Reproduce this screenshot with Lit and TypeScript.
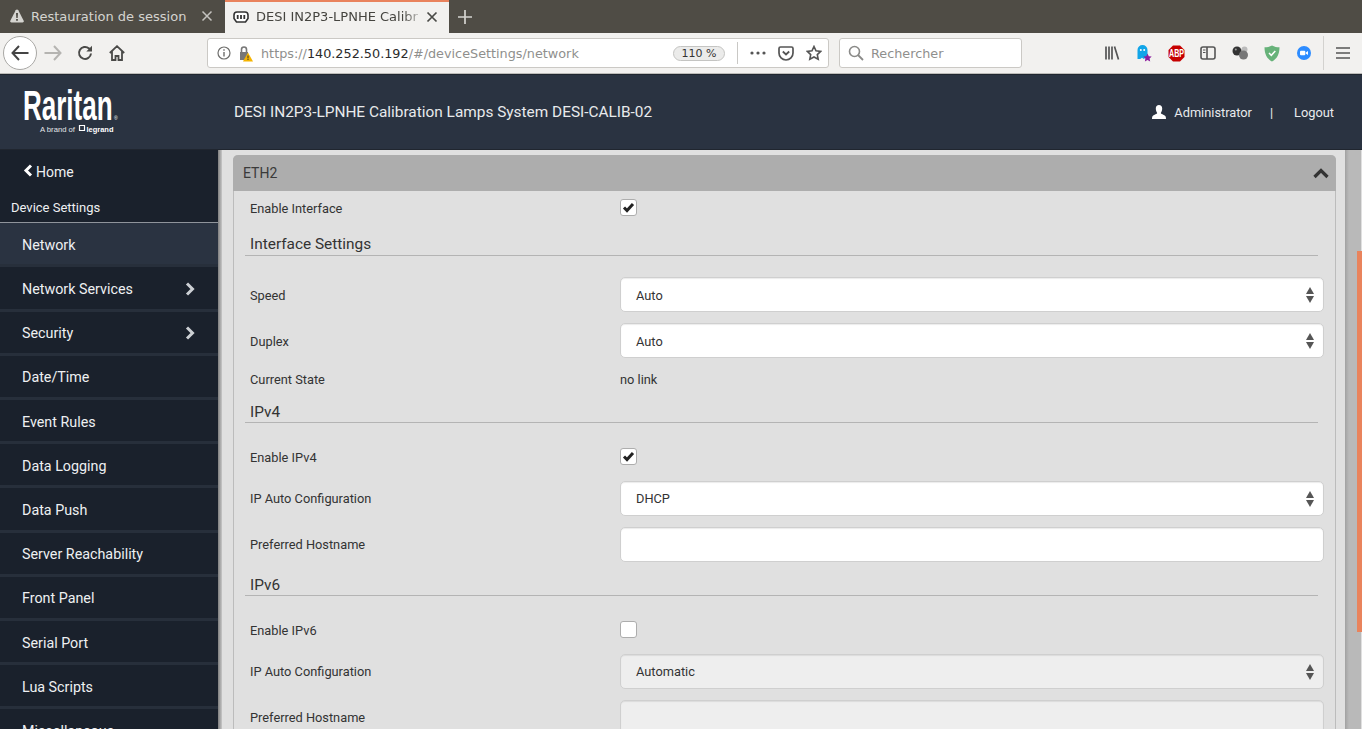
import { LitElement, html, css, svg } from "lit";
import { customElement } from "lit/decorators.js";

const menu = [
  { label: "Network", active: true },
  { label: "Network Services", more: true },
  { label: "Security", more: true },
  { label: "Date/Time" },
  { label: "Event Rules" },
  { label: "Data Logging" },
  { label: "Data Push" },
  { label: "Server Reachability" },
  { label: "Front Panel" },
  { label: "Serial Port" },
  { label: "Lua Scripts" },
  { label: "Miscellaneous" },
];

const arrows = html`<svg class="arrows" width="10" height="18" viewBox="0 0 10 18">
  <path d="M5 1l4 7H1z" fill="#555" /><path d="M1 10h8l-4 7z" fill="#555" />
</svg>`;

const tick = svg`<path d="M3 7.500l3 3 6-6.500" fill="none" stroke="#222" stroke-width="3" />`;

@customElement("app-root")
export class AppRoot extends LitElement {
  static styles = css`
    :host {
      display: block;
      width: 1362px;
      height: 729px;
      overflow: hidden;
      font-family: Roboto, sans-serif;
      color: #333;
      background: #e0e0e0;
    }

    /* browser chrome */
    .tabs {
      display: flex;
      height: 33px;
      background: #4f4c45;
      font: 13px "DejaVu Sans", sans-serif;
    }
    .tab {
      display: flex;
      align-items: center;
      box-sizing: border-box;
      height: 33px;
      width: 225px;
      padding: 0 12px 1px 10px;
      color: #d5d4d0;
    }
    .tab.current {
      width: 224px;
      background: #f2f1ef;
      color: #45443f;
      border-top: 2px solid #e9825c;
      padding: 0 11px 2px 8px;
    }
    .tab span {
      flex: 1;
      margin-left: 7px;
      white-space: nowrap;
      overflow: hidden;
    }
    .tab.current span {
      -webkit-mask-image: linear-gradient(90deg, #000 86%, transparent);
      mask-image: linear-gradient(90deg, #000 86%, transparent);
    }
    .plus {
      align-self: center;
      margin-left: 9px;
    }
    .toolbar {
      display: flex;
      align-items: center;
      box-sizing: border-box;
      height: 41px;
      background: #f2f1ef;
      border-bottom: 1px solid #bdbcb9;
      padding-left: 3px;
      font: 12.8px "DejaVu Sans", sans-serif;
      color: #8f8f8d;
    }
    .back {
      display: grid;
      place-items: center;
      box-sizing: border-box;
      width: 34px;
      height: 34px;
      border-radius: 50%;
      background: #fff;
      border: 1px solid #a9a8a5;
    }
    .tool {
      display: grid;
      place-items: center;
      flex: none;
      width: 32px;
      height: 30px;
    }
    .url {
      display: flex;
      align-items: center;
      box-sizing: border-box;
      width: 622px;
      height: 30px;
      margin-left: 74px;
      margin-right: 10px;
      background: #fff;
      border: 1px solid #cbc9c5;
      border-radius: 3px;
      padding-left: 9px;
    }
    .lock {
      margin-left: 7px;
    }
    .address {
      margin-left: 8px;
      flex: 1;
    }
    .address b {
      font-weight: 400;
      color: #2b2b2b;
    }
    .zoom {
      box-sizing: border-box;
      width: 52px;
      height: 15px;
      line-height: 13px;
      margin-right: 12px;
      font-size: 11px;
      text-align: center;
      color: #333;
      background: #ebebea;
      border: 1px solid #c4c4c2;
      border-radius: 8px;
    }
    .rule {
      width: 1px;
      height: 22px;
      background: #c9c8c5;
      margin-right: 6px;
    }
    .url .tool {
      width: 28px;
    }
    .search {
      display: flex;
      align-items: center;
      gap: 7px;
      box-sizing: border-box;
      width: 183px;
      height: 30px;
      margin-right: 74px;
      background: #fff;
      border: 1px solid #cbc9c5;
      border-radius: 3px;
      padding-left: 8px;
    }
    .ext {
      width: 32px;
    }
    .sep {
      width: 1px;
      height: 34px;
      background: #d3d2cf;
      margin: 0 3px;
    }

    /* application header */
    .header {
      display: flex;
      align-items: center;
      box-sizing: border-box;
      height: 76px;
      background: #2a3341;
      color: #fff;
      font-size: 12.8px;
      border-top: 1px solid #20262f;
      border-bottom: 1px solid #20262f;
    }
    .logo {
      flex: none;
      width: 234px;
      padding-left: 23px;
      box-sizing: border-box;
      line-height: 0;
    }
    .title {
      flex: 1;
      font-size: 15.4px;
      color: #e8eaec;
    }
    .user {
      display: flex;
      align-items: center;
      color: #e8eaec;
    }
    .user svg {
      margin-right: 8px;
    }
    .pipe {
      margin: 0 21px 0 18px;
    }
    .user a {
      margin-right: 28px;
    }

    /* main area */
    .main {
      display: flex;
      height: 579px;
    }
    .side {
      flex: none;
      width: 218px;
      background: #1a212c;
      color: #eef0f2;
      font-size: 14.3px;
      overflow: hidden;
    }
    .home {
      display: flex;
      align-items: center;
      gap: 3px;
      height: 43.3px;
      padding-left: 23px;
      font-size: 14px;
    }
    .home svg {
      margin-bottom: 3px;
    }
    .crumb {
      box-sizing: border-box;
      height: 30px;
      padding: 7px 0 0 11px;
      font-size: 13px;
      border-bottom: 1px solid #8f949b;
    }
    .item {
      display: flex;
      align-items: center;
      justify-content: space-between;
      box-sizing: border-box;
      height: 44.2px;
      padding: 2px 23px 0 22px;
      border-bottom: 3px solid #272f3b;
    }
    .item.active {
      background: #2a3341;
    }
    .content {
      flex: none;
      box-sizing: border-box;
      width: 1128px;
      padding: 5px 0 0 15px;
      overflow: hidden;
      background: linear-gradient(90deg, #7f7f7f, #c8c8c8 4px, #e0e0e0 4px);
      border-right: 1px solid #a4a4a4;
    }
    .track {
      flex: none;
      width: 15px;
      background: linear-gradient(90deg, #a8a8a8, #b9b9b9 3px);
    }
    .thumb {
      width: 5px;
      height: 381px;
      margin: 101px 0 0 11px;
      background: #e9835c;
    }

    /* panel */
    .panel {
      box-sizing: border-box;
      width: 1103px;
      height: 640px;
      border: 1px solid #bcbcbc;
      border-top: 0;
      border-radius: 5px 5px 0 0;
    }
    .panel-head {
      display: flex;
      align-items: center;
      justify-content: space-between;
      height: 36px;
      margin: 0 -1px;
      padding: 0 7px 0 10px;
      background: #adadad;
      border-radius: 5px 5px 0 0;
      font-size: 14px;
      color: #3a3a3a;
    }
    .panel-body {
      padding: 0 11px 0 16px;
      font-size: 12.8px;
    }
    .section {
      box-sizing: border-box;
      height: 24px;
      margin: 12px 6px 0 -5px;
      padding: 4px 0 0 5px;
      font-size: 15.4px;
      line-height: 18px;
      border-bottom: 1px solid #b4b4b4;
    }
    .section.first {
      margin-top: 16px;
      padding-top: 3px;
    }
    .section.last {
      margin-top: 10px;
    }
    .row {
      display: grid;
      grid-template-columns: 370px 1fr;
      align-items: center;
      margin-top: 11px;
    }
    .row.low span {
      padding-top: 2px;
    }
    .row.after-section {
      margin-top: 21px;
    }
    .row.state {
      margin-top: 13px;
      height: 16px;
    }
    .row.check {
      height: 17px;
      margin-top: 25px;
    }
    .row.check > span:first-child {
      padding-top: 2px;
    }
    .row.check.top {
      margin-top: 8px;
    }
    .row.check + .row {
      margin-top: 16px;
    }
    .box {
      display: grid;
      place-items: center;
      box-sizing: border-box;
      width: 17px;
      height: 17px;
      background: #fff;
      border: 1px solid #adadad;
      border-radius: 3px;
    }
    .field {
      display: flex;
      align-items: center;
      justify-content: space-between;
      box-sizing: border-box;
      height: 35px;
      padding: 0 8px 0 15px;
      background: #fff;
      border: 1px solid #cfcfcf;
      border-radius: 5px;
      box-shadow: inset 0 1px 1px rgba(0, 0, 0, 0.08);
    }
    .field.off {
      background: #eee;
    }
  `;

  private check(on: boolean) {
    return html`<div class="box">
      ${on ? html`<svg width="15" height="15" viewBox="0 0 15 15">${tick}</svg>` : ""}
    </div>`;
  }

  private select(value: string, off = false) {
    return html`<div class="field ${off ? "off" : ""}"><span>${value}</span>${arrows}</div>`;
  }

  private browser() {
    return html`
      <div class="tabs">
        <div class="tab">
          <svg width="14" height="14" viewBox="0 0 14 14">
            <path d="M7 .5c.6 0 1 .3 1.300.8l5.400 10.400c.4.900-.1 1.800-1.100 1.800H1.400c-1 0-1.500-.9-1.100-1.800L5.700 1.300C6 .8 6.400.5 7 .5z" fill="#d5d4d0" />
            <path d="M6 4h2l-.3 5H6.300zM6.100 10h1.800v1.800H6.100z" fill="#4f4c45" />
          </svg>
          <span>Restauration de session</span>
          <svg width="12" height="12" viewBox="0 0 12 12"><path d="M1.500 1.500l9 9M10.500 1.500l-9 9" stroke="#c4c3bf" stroke-width="1.500" /></svg>
        </div>
        <div class="tab current">
          <svg width="16" height="12" viewBox="0 0 16 12">
            <path d="M4 1h8c1.700 0 3 1.300 3 3v3.500L12.500 11h-9L1 7.500V4c0-1.700 1.300-3 3-3z" fill="#fff" stroke="#333" stroke-width="1.600" />
            <path d="M3.800 4h1.800v4H3.800zM7.100 4h1.800v4H7.100zM10.400 4h1.800v4h-1.800z" fill="#333" />
          </svg>
          <span>DESI IN2P3-LPNHE Calibr</span>
          <svg width="12" height="12" viewBox="0 0 12 12"><path d="M1.500 1.500l9 9M10.500 1.500l-9 9" stroke="#4a4a46" stroke-width="1.700" /></svg>
        </div>
        <svg class="plus" width="14" height="14" viewBox="0 0 14 14"><path d="M7 0v14M0 7h14" stroke="#d5d4d0" stroke-width="1.700" /></svg>
      </div>
      <div class="toolbar">
        <div class="back">
          <svg width="18" height="16" viewBox="0 0 18 16"><path d="M8 1L1.500 8 8 15M2 8h15.500" fill="none" stroke="#444" stroke-width="2" /></svg>
        </div>
        <div class="tool">
          <svg width="18" height="16" viewBox="0 0 18 16"><path d="M10 1l6.500 7-6.500 7M16 8H.5" fill="none" stroke="#b5b4b1" stroke-width="2" /></svg>
        </div>
        <div class="tool">
          <svg width="16" height="16" viewBox="0 0 16 16"><path d="M14 8.500A6 6 0 1 1 12 3.400L14 5" fill="none" stroke="#4a4a48" stroke-width="2" /><path d="M15 .8v5.700H9.300z" fill="#4a4a48" /></svg>
        </div>
        <div class="tool">
          <svg width="16" height="16" viewBox="0 0 16 16"><path d="M.8 8L8 1.200 15.200 8M3 6.500V15h3.500v-4h3v4H13V6.500" fill="none" stroke="#4a4a48" stroke-width="1.800" /></svg>
        </div>
        <div class="url">
          <svg width="14" height="14" viewBox="0 0 14 14"><circle cx="7" cy="7" r="6" fill="none" stroke="#6e6e6c" stroke-width="1.200" /><path d="M6.300 6h1.400v4.500H6.300zM6.300 3.300h1.400v1.500H6.300z" fill="#6e6e6c" /></svg>
          <svg class="lock" width="15" height="17" viewBox="0 0 15 17">
            <path d="M2 7h8v8H2z" fill="#777" /><path d="M3.500 7V4.500a2.500 2.500 0 0 1 5 0V7" fill="none" stroke="#777" stroke-width="1.600" />
            <path d="M10 7.500l5 9H5z" fill="#f5b400" /><path d="M9.500 10.500h1v3h-1zM9.500 14h1v1h-1z" fill="#333" />
          </svg>
          <span class="address">https://<b>140.252.50.192</b>/#/deviceSettings/network</span>
          <span class="zoom">110 %</span>
          <span class="rule"></span>
          <div class="tool">
            <svg width="16" height="4" viewBox="0 0 16 4"><circle cx="2" cy="2" r="1.600" fill="#555" /><circle cx="8" cy="2" r="1.600" fill="#555" /><circle cx="14" cy="2" r="1.600" fill="#555" /></svg>
          </div>
          <div class="tool">
            <svg width="16" height="15" viewBox="0 0 16 15"><path d="M2.500 1h11c.8 0 1.500.7 1.500 1.500V7a7 7 0 0 1-14 0V2.500C1 1.700 1.700 1 2.500 1z" fill="none" stroke="#555" stroke-width="1.700" /><path d="M4.800 5.500L8 8.500l3.200-3" fill="none" stroke="#555" stroke-width="1.800" /></svg>
          </div>
          <div class="tool">
            <svg width="16" height="16" viewBox="0 0 16 16"><path d="M8 1.500l2 4.300 4.700.6-3.400 3.200.9 4.700L8 12l-4.200 2.300.9-4.700L1.300 6.400 6 5.800z" fill="none" stroke="#555" stroke-width="1.600" /></svg>
          </div>
        </div>
        <div class="search">
          <svg width="16" height="16" viewBox="0 0 16 16"><circle cx="6.500" cy="6.500" r="5" fill="none" stroke="#8a8a88" stroke-width="1.600" /><path d="M10 10l5 5" stroke="#8a8a88" stroke-width="1.800" /></svg>
          <span>Rechercher</span>
        </div>
        <div class="tool ext">
          <svg width="16" height="16" viewBox="0 0 16 16"><path d="M2 1.500v13M5 1.500v13M8 1.500v13M10.500 1.500l4 13" stroke="#555" stroke-width="1.700" /></svg>
        </div>
        <div class="tool ext">
          <svg width="16" height="18" viewBox="0 0 16 18">
            <path d="M1.500 15V6a5 5 0 0 1 10 0v9l-2-1.300-1.700 1.300-1.800-1.300-1.800 1.300z" fill="#12a5e8" />
            <circle cx="4.800" cy="6" r="1" fill="#fff" /><circle cx="8.200" cy="6" r="1" fill="#fff" />
            <path d="M11.500 9.500l1.300 2.700 2.900.3-2.100 2 .6 2.900-2.700-1.400-2.600 1.400.5-2.900-2-2 2.900-.3z" fill="#8e1e9e" />
          </svg>
        </div>
        <div class="tool ext">
          <svg width="17" height="17" viewBox="0 0 17 17">
            <path d="M5 .5h7L16.500 5v7L12 16.500H5L.5 12V5z" fill="#c60000" />
            <text x="1" y="12" textLength="15" lengthAdjust="spacingAndGlyphs" font-family="Liberation Sans" font-weight="700" font-size="10" fill="#fff">ABP</text>
          </svg>
        </div>
        <div class="tool ext">
          <svg width="16" height="14" viewBox="0 0 16 14"><rect x="1" y="1" width="14" height="12" rx="2" fill="none" stroke="#555" stroke-width="1.600" /><path d="M7 1v12" stroke="#555" stroke-width="1.600" /><path d="M3 4h2.500M3 6.500h2.500" stroke="#555" stroke-width="1.200" /></svg>
        </div>
        <div class="tool ext">
          <svg width="17" height="14" viewBox="0 0 17 14"><circle cx="12.500" cy="3.500" r="3" fill="#bbb" /><circle cx="5" cy="5" r="4.500" fill="#333" /><circle cx="3.800" cy="3.500" r="1" fill="#999" /><circle cx="11.500" cy="9" r="4.500" fill="#777" /></svg>
        </div>
        <div class="tool ext">
          <svg width="16" height="17" viewBox="0 0 16 17"><path d="M8 .5c2.500 1.300 4.700 1.800 7.500 1.800C15.500 9 13 14 8 16.500 3 14 .5 9 .5 2.300 3.300 2.300 5.500 1.800 8 .5z" fill="#67b279" /><path d="M5 8l2.300 2.300L11.300 6" fill="none" stroke="#fff" stroke-width="1.500" /></svg>
        </div>
        <div class="tool ext">
          <svg width="14" height="14" viewBox="0 0 14 14"><circle cx="7" cy="7" r="7" fill="#2d8cff" /><rect x="3" y="4.700" width="5.300" height="4.600" rx="1" fill="#fff" /><path d="M8.800 6.500L11 5v4L8.800 7.500z" fill="#fff" /></svg>
        </div>
        <span class="sep"></span>
        <div class="tool ext">
          <svg width="14" height="12" viewBox="0 0 14 12"><path d="M0 1h14M0 6h14M0 11h14" stroke="#555" stroke-width="1.700" /></svg>
        </div>
      </div>
    `;
  }

  private form() {
    return html`
      <div class="panel">
        <div class="panel-head">
          <span>ETH2</span>
          <svg width="16" height="11" viewBox="0 0 16 11"><path d="M1.500 9L8 2.500 14.500 9" fill="none" stroke="#333" stroke-width="3.200" /></svg>
        </div>
        <div class="panel-body">
          <div class="row check top"><span>Enable Interface</span>${this.check(true)}</div>
          <div class="section first">Interface Settings</div>
          <div class="row low after-section"><span>Speed</span>${this.select("Auto")}</div>
          <div class="row low"><span>Duplex</span>${this.select("Auto")}</div>
          <div class="row state"><span>Current State</span><span>no link</span></div>
          <div class="section">IPv4</div>
          <div class="row check"><span>Enable IPv4</span>${this.check(true)}</div>
          <div class="row"><span>IP Auto Configuration</span>${this.select("DHCP")}</div>
          <div class="row"><span>Preferred Hostname</span><div class="field"></div></div>
          <div class="section last">IPv6</div>
          <div class="row check"><span>Enable IPv6</span>${this.check(false)}</div>
          <div class="row"><span>IP Auto Configuration</span>${this.select("Automatic", true)}</div>
          <div class="row"><span>Preferred Hostname</span><div class="field off"></div></div>
        </div>
      </div>
    `;
  }

  override render() {
    return html`
      ${this.browser()}
      <div class="header">
        <div class="logo">
          <svg width="98" height="48" viewBox="0 0 98 48">
            <text transform="scale(1 1.650)" x="0" y="19.400" font-family="Liberation Sans" font-weight="700" font-size="26" fill="#fff">Raritan</text>
            <text x="91" y="32" font-family="Liberation Sans" font-size="5" fill="#fff">®</text>
            <text x="17" y="44" textLength="35" lengthAdjust="spacingAndGlyphs" font-family="Liberation Sans" font-size="8" fill="#e4e6e8">A brand of</text>
            <path d="M56.500 37.500h5v5h-5z" fill="none" stroke="#fff" stroke-width="1.200" />
            <text x="63.500" y="44" textLength="27" lengthAdjust="spacingAndGlyphs" font-family="Liberation Sans" font-weight="700" font-size="8" fill="#fff">legrand</text>
          </svg>
        </div>
        <div class="title">DESI IN2P3-LPNHE Calibration Lamps System DESI-CALIB-02</div>
        <div class="user">
          <svg width="14" height="14" viewBox="0 0 14 14"><path d="M7 0c2 0 3.200 1.500 3.200 3.500S9.300 7 8.800 8c0 1 3 1.500 4.500 3 .5.600.7 1.500.7 3H0c0-1.500.2-2.400.7-3 1.500-1.500 4.500-2 4.500-3-.5-1-1.400-2.500-1.400-4.500S5 0 7 0z" fill="#fff" /></svg>
          <span>Administrator</span>
          <span class="pipe">|</span>
          <a>Logout</a>
        </div>
      </div>
      <div class="main">
        <nav class="side">
          <div class="home">
            <svg width="10" height="13" viewBox="0 0 10 13"><path d="M8 1.500L3 6.500l5 5" fill="none" stroke="#fff" stroke-width="3" /></svg>
            <span>Home</span>
          </div>
          <div class="crumb">Device Settings</div>
          ${menu.map(
            (m) => html`<div class="item ${m.active ? "active" : ""}">
              <span>${m.label}</span>
              ${m.more
                ? html`<svg width="10" height="14" viewBox="0 0 10 14"><path d="M2 1.500L7.500 7 2 12.500" fill="none" stroke="#ccd0d4" stroke-width="3" /></svg>`
                : ""}
            </div>`,
          )}
        </nav>
        <div class="content">${this.form()}</div>
        <div class="track"><div class="thumb"></div></div>
      </div>
    `;
  }
}
